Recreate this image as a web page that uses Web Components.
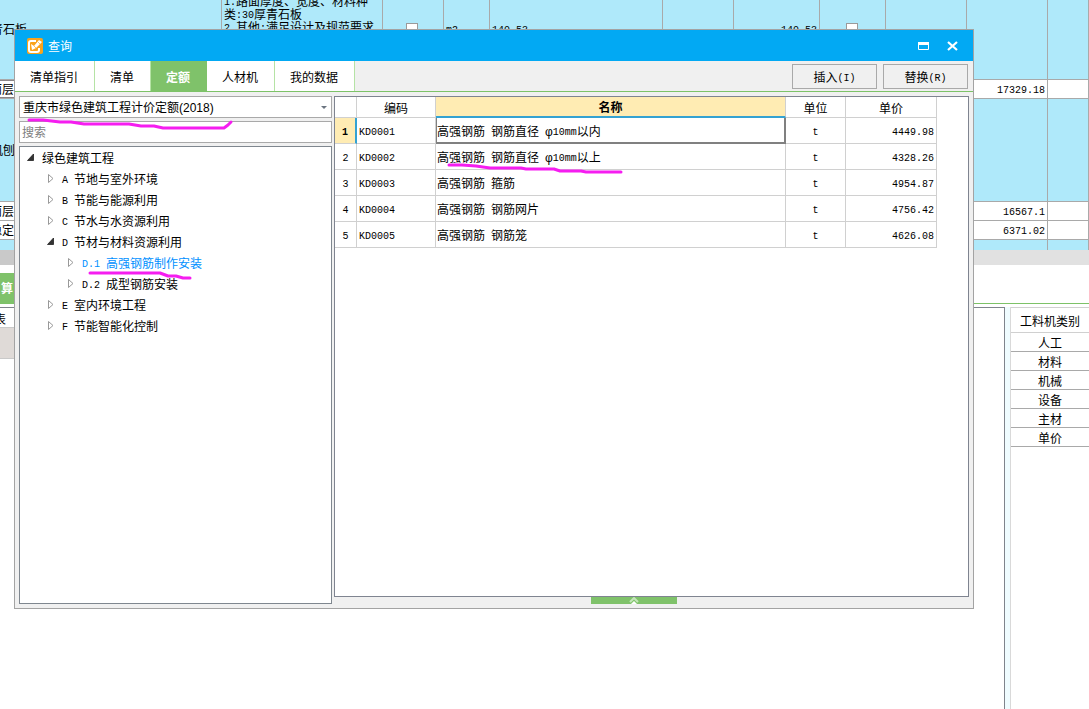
<!DOCTYPE html>
<html lang="zh-CN">
<head>
<meta charset="utf-8">
<title>查询</title>
<style>
  html, body { height: 100%; }
  body {
    margin: 0; overflow: hidden; background: #fff; color: #000;
    font: 12px/14px "Liberation Sans", "Noto Sans CJK SC", sans-serif;
  }
</style>
</head>
<body>
<pricing-app></pricing-app>

<script>
const BASE = `
  * { box-sizing: border-box; }
  .m { font-family: "Liberation Mono", monospace; font-size: 10px; line-height: 10px; white-space: pre; vertical-align: 1px; }
  table { border-collapse: separate; border-spacing: 0; table-layout: fixed; }
  th { font-weight: normal; }
  td, th { overflow: hidden; white-space: nowrap; }
  button, input, select { font: inherit; color: inherit; margin: 0; border-radius: 0; }
`;
/* Latin runs are set in the half-width face */
const mix = s => s.replace(/[\x20-\x7e]+/g, r => `<span class="m">${r}</span>`);

class Base extends HTMLElement {
  connectedCallback() {
    if (this.shadowRoot) return;
    this.attachShadow({ mode: 'open' }).innerHTML = `<style>${BASE}${this.css()}</style>${this.html()}`;
  }
}

/* Whole application: worksheet behind, query window over it */
customElements.define('pricing-app', class extends Base {
  css() { return `
    :host { display: flex; flex-direction: column; min-height: 100vh; position: relative; overflow: hidden; }
    bottom-panes { flex: 1; }
    query-window { position: absolute; inset: 29px 115px 100px 14px; }
    svg { position: absolute; left: 0; top: 0; pointer-events: none; }`; }
  html() { return `
    <work-sheet></work-sheet>
    <bottom-panes></bottom-panes>
    <query-window></query-window>
    <svg width="640" height="290" fill="none" stroke="#f51df0" stroke-width="3" stroke-linecap="round" stroke-linejoin="round" aria-hidden="true">
      <path d="M29 120H43L60 122H71L84 124H129L141 126H154L163 128H224L228 125L231 122"/>
      <path d="M449 165H462L476 166L490 168H521L526 169H554L560 171H581L586 172H621"/>
      <path d="M90 273H160L168 276H176L183 278H190"/>
    </svg>`; }
});

customElements.define('work-sheet', class extends Base {
  css() { return `
    :host { display: block; overflow: hidden; }
    table { width: calc(100% + 10px); margin: -21px 0 0 -10px; }
    td { background: #afe9fa; border: solid #a9a9a9; border-width: 0 1px 1px 0; padding: 2px 2px 0; vertical-align: middle; }
    .w td { background: #fff; }
    .w td, .r { text-align: right; }
    .w td:first-child { text-align: left; padding: 2px 0 0; }
    td:first-child { padding: 2px 1px 0; }
    .focus td:first-child { box-shadow: inset 0 1px #8b8587, inset 0 -1px #8b8587; }
    td.spec { vertical-align: top; padding-top: 17px; white-space: pre; line-height: 13px; }
    td.c { text-align: center; padding: 0 2px 2px 0; }
    input { appearance: none; display: inline-block; width: 12px; height: 12px; border: 1px solid #9a9a9a; background: #fff; vertical-align: middle; }
    .end td { border-bottom: 0; }
    .bar { height: 15px; background: linear-gradient(90deg, #c9c9c9 50%, #e1e1e1 50%); }`; }
  html() {
    const cells = n => '<td></td>'.repeat(n);
    const row = (h, cls, name, price) =>
      `<tr class="${cls}" style="height:${h}px"><td>${name}</td>${cells(8)}<td>${mix(price)}</td><td></td></tr>`;
    return `
    <table>
      <colgroup>${[232,161,61,46,173,71,86,66,81,81].map(w => `<col style="width:${w}px">`).join('')}<col></colgroup>
      <tbody>
        <tr style="height:101px"><td>青石板</td>
          <td class="spec">${mix('1.路面厚度、宽度、材料种')}<br>${mix('类:30厚青石板')}<br>${mix('2.其他:满足设计及规范要求')}</td>
          <td class="c"><input type="checkbox" aria-label="综合单价"></td><td>${mix('m2')}</td><td>${mix('140.53')}</td><td></td>
          <td class="r">${mix('140.53')}</td><td class="c"><input type="checkbox" aria-label="锁定"></td>${cells(3)}</tr>
        ${row(19, 'w focus', '面层', '17329.18')}
        ${row(103, '', '机刨', '')}
        ${row(19, 'w', '面层', '16567.1')}
        ${row(19, 'w', '稳定', '6371.02')}
        ${row(10, 'end', '', '')}
      </tbody>
    </table>
    <div class="bar"></div>`; }
});

customElements.define('bottom-panes', class extends Base {
  css() { return `
    :host { display: flex; flex-direction: column; }
    nav { display: flex; align-items: flex-end; height: 39px; border-bottom: 1px solid #7dc268; }
    nav button { width: 60px; height: 30px; border: 0; padding: 2px 1px 0; background: #7fc26a; color: #fff; font-weight: bold; text-align: left; }
    .panes { flex: 1; display: flex; margin-top: 3px; }
    .left { flex: 1; border: solid #7f848c; border-width: 1px 1px 0 0; overflow: hidden; }
    .head { height: 20px; width: 60px; line-height: 24px; margin-left: -6px; border-bottom: 1px solid #c9c9c9; }
    .sel { width: 60px; height: 31px; background: #dfdad7; border-bottom: 1px solid #c9c9c9; }
    .gap { width: 5px; background: #effcff; }
    .right { width: 79px; border-left: 1px solid #d9d9d9; }
    .right table { width: 100%; border-top: 1px solid #d0d0d0; }
    td, th { border-bottom: 1px solid #a9a9a9; text-align: center; padding: 3px 0 0; height: 19px; }
    th { height: 25px; border-color: #d0d0d0; }`; }
  html() { return `
    <nav><button type="button">算</button></nav>
    <div class="panes">
      <div class="left"><div class="head">表</div><div class="sel"></div></div>
      <div class="gap"></div>
      <div class="right"><table><thead><tr><th>工料机类别</th></tr></thead><tbody>
        ${['人工','材料','机械','设备','主材','单价'].map(t => `<tr><td>${t}</td></tr>`).join('')}
      </tbody></table></div>
    </div>`; }
});

customElements.define('query-window', class extends Base {
  css() { return `
    :host { display: flex; flex-direction: column; border: 1px solid #a3a3a3; background: #f0f0f0; }
    header { display: flex; align-items: center; height: 31px; background: #02a9f3; color: #fff; padding: 0 14px 0 12px; }
    header h1 { font-size: 12px; font-weight: normal; margin: 0 auto 0 5px; padding-top: 2px; }
    header button { border: 0; background: none; padding: 0; width: 12px; height: 12px; margin-left: 17px; }
    svg { display: block; }
    .tools { display: flex; justify-content: space-between; height: 31px; border-bottom: 1px solid #7dc268; }
    .actions { display: flex; gap: 6px; padding: 3px 5px 2px 0; }
    .actions button { width: 85px; border: 1px solid #a9a9a9; background: #f0f0f0; padding: 2px 0 0; }
    .body { flex: 1; display: flex; gap: 2px; padding: 4px; min-height: 0; }
    .side { width: 313px; display: flex; flex-direction: column; gap: 3px; }
    .combo { position: relative; display: flex; }
    .combo svg { position: absolute; right: 5px; top: 10px; pointer-events: none; }
    select, .side input { width: 100%; height: 22px; border: 1px solid #a9a9a9; background: #fff; appearance: none; padding: 2px 3px 0; outline: 0; }
    .side input { padding: 2px 2px 0; }
    input::placeholder { color: #808080; opacity: 1; }
    quota-tree { flex: 1; }
    .main { flex: 1; display: flex; flex-direction: column; min-width: 0; }
    quota-table { flex: 1; }
    .foot { display: flex; justify-content: center; padding-right: 35px; }
    .fold { width: 86px; height: 7px; border: 0; padding: 0; background: #7fc26a; display: flex; justify-content: center; }`; }
  html() { return `
    <header>
      <svg width="16" height="16" viewBox="0 0 16 16" aria-hidden="true">
        <rect width="16" height="16" rx="2" fill="#f9a31c"/>
        <path d="M9 3H4Q2 3 2 5V12Q2 14 4 14H10Q12 14 12 12V10" fill="#f9a31c" stroke="#fff" stroke-width="2"/>
        <path d="M4 6L7 8L12 2L15 4L9 10L5 12Z" fill="#fff"/>
        <path d="M7 8L9 10M11 4L13 6" stroke="#f9b648" stroke-width=".8"/>
      </svg>
      <h1>查询</h1>
      <button type="button" aria-label="最大化"><svg width="12" height="12" viewBox="0 0 12 12"><path d="M.5 2.500H10.500V9.500H.5Z" fill="none" stroke="#fff"/><path d="M0 2H11V5H0Z" fill="#fff"/></svg></button>
      <button type="button" aria-label="关闭"><svg width="12" height="12" viewBox="0 0 12 12"><path d="M1 2L10 10M10 2L1 10" stroke="#fff" stroke-width="2.200"/></svg></button>
    </header>
    <div class="tools">
      <tab-strip></tab-strip>
      <div class="actions"><button type="button">${mix('插入(I)')}</button><button type="button">${mix('替换(R)')}</button></div>
    </div>
    <div class="body">
      <div class="side">
        <div class="combo">
          <select aria-label="定额库"><option>重庆市绿色建筑工程计价定额(2018)</option></select>
          <svg width="6" height="3" aria-hidden="true"><path d="M0 0H6L3 3Z" fill="#6b7480"/></svg>
        </div>
        <input type="text" placeholder="搜索" aria-label="搜索">
        <quota-tree></quota-tree>
      </div>
      <div class="main">
        <quota-table></quota-table>
        <div class="foot"><button class="fold" type="button" aria-label="展开"><svg width="12" height="7"><path d="M2 5L6 1L10 5" fill="none" stroke="#c5e6ba" stroke-width="2"/><path d="M3 7L6 4L9 7Z" fill="#fff"/></svg></button></div>
      </div>
    </div>`; }
});

customElements.define('tab-strip', class extends Base {
  css() { return `
    :host { display: flex; }
    button { border: 0; border-right: 1px solid #b5e3a5; background: #fff; padding: 4px 16px 0 15px; }
    .on { background: #7fc26a; border-color: #7fc26a; color: #fff; font-weight: bold; }`; }
  html() { return ['清单指引','清单','定额','人材机','我的数据'].map(t =>
    `<button type="button" role="tab"${t === '定额' ? ' class="on" aria-selected="true"' : ''}>${t}</button>`).join(''); }
});

customElements.define('quota-tree', class extends Base {
  css() { return `
    :host { display: block; background: #fff; border: 1px solid #7f878f; overflow: hidden; }
    tree-node { padding-left: 7px; }
    tree-node tree-node { padding-left: 20px; }`; }
  html() { return `
    <tree-node open label="绿色建筑工程">
      <tree-node label="A 节地与室外环境"></tree-node>
      <tree-node label="B 节能与能源利用"></tree-node>
      <tree-node label="C 节水与水资源利用"></tree-node>
      <tree-node open label="D 节材与材料资源利用">
        <tree-node current label="D.1 高强钢筋制作安装"></tree-node>
        <tree-node label="D.2 成型钢筋安装"></tree-node>
      </tree-node>
      <tree-node label="E 室内环境工程"></tree-node>
      <tree-node label="F 节能智能化控制"></tree-node>
    </tree-node>`.replace(/>\s+</g, '><'); }
});

customElements.define('tree-node', class extends Base {
  css() { return `
    :host { display: block; }
    .row { display: flex; align-items: center; height: 21px; gap: 7px; padding-top: 3px; }
    :host([current]) .row { color: #0090ff; }
    svg { flex: none; margin-bottom: 4px; }`; }
  html() {
    const icon = this.hasAttribute('open')
      ? '<path d="M6.500 1V7.500H.5Z" fill="#333" stroke="#222" stroke-width=".8"/>'
      : '<path d="M1.500 .5V8.500L6 4.500Z" fill="#fff" stroke="#999"/>';
    return `<div class="row"><svg width="8" height="9" aria-hidden="true">${icon}</svg><span>${mix(this.getAttribute('label'))}</span></div><slot></slot>`;
  }
});

customElements.define('quota-table', class extends Base {
  css() { return `
    :host { display: block; background: #fff; border: 1px solid #7f8490; overflow: hidden; }
    table { width: 602px; }
    td, th { border: solid #d0d0d0; border-width: 0 1px 1px 0; padding: 3px 2px 0; height: 26px; text-align: left; }
    thead th { height: 21px; text-align: center; }
    thead .on { background: #ffecb3; font-weight: bold; border-bottom: 2px solid #34a2d2; }
    tbody th, td.u { text-align: center; padding: 3px 0 0; }
    td.n { padding-left: 1px; }
    .p { text-align: right; }
    .cur th { background: #ffecb3; border-right: 2px solid #34a2d2; font-weight: bold; }
    .cur .n { border-color: #808080; box-shadow: inset 1px 0 #808080, inset -1px -1px #808080; }`; }
  html() {
    const rows = [
      ['KD0001','高强钢筋 钢筋直径 φ10mm以内','4449.98'],
      ['KD0002','高强钢筋 钢筋直径 φ10mm以上','4328.26'],
      ['KD0003','高强钢筋 箍筋','4954.87'],
      ['KD0004','高强钢筋 钢筋网片','4756.42'],
      ['KD0005','高强钢筋 钢筋笼','4626.08']];
    return `<table>
      <colgroup>${[22,79,350,60,91].map(w => `<col style="width:${w}px">`).join('')}</colgroup>
      <thead><tr><th></th><th>编码</th><th class="on">名称</th><th>单位</th><th>单价</th></tr></thead>
      <tbody>${rows.map((r, i) => `<tr${i ? '' : ' class="cur"'}><th>${mix(String(i + 1))}</th><td>${mix(r[0])}</td><td class="n">${mix(r[1])}</td><td class="u">${mix('t')}</td><td class="p">${mix(r[2])}</td></tr>`).join('')}</tbody>
    </table>`;
  }
});
</script>
</body>
</html>
